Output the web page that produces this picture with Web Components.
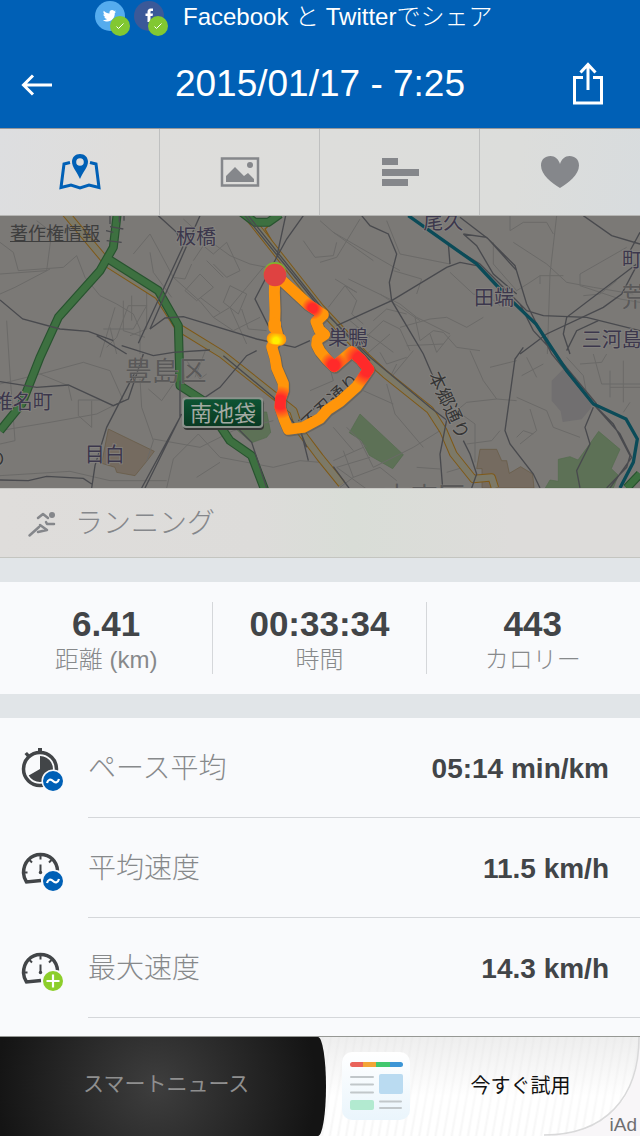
<!DOCTYPE html>
<html lang="ja">
<head>
<meta charset="utf-8">
<meta name="viewport" content="width=device-width, initial-scale=1">
<title>2015/01/17 - 7:25</title>
<style>
  html, body {
    height: 100%;
    margin: 0;
  }

  body {
    font-family: "Liberation Sans", "Noto Sans CJK JP", sans-serif;
    font-weight: 300;
    background: #f9fafc;
  }
</style>
</head>
<body>
<workout-page></workout-page>

<script>
  const icons = {
    back: `<svg width="32" height="24" viewBox="0 0 32 24" fill="none" stroke="#fff" stroke-width="3">
      <path d="M32 13H4M13 3.500L3.500 13l9.500 9.500"/></svg>`,
    share: `<svg width="32" height="44" viewBox="0 0 32 44" fill="none" stroke="#fff" stroke-width="3">
      <path d="M11 15.500H2.500V41h27V15.500H21M16 28V3M8.500 10.500L16 2.500l7.500 8"/></svg>`,
    map: `<svg width="44" height="36" viewBox="0 0 44 36">
      <path d="M12 8.500L6 10 3 33.500l10-2.500 9 3 9-3 10 2.500L38 10l-6-1.500" fill="none" stroke="#0060b6" stroke-width="3"/>
      <path fill="#0060b6" fill-rule="evenodd" d="M22 0c-4.700 0-8 3.300-8 7.800C14 13 19 18 22 25c3-7 8-12 8-17.200C30 3.300 26.700 0 22 0zm0 4.200a3.800 3.800 0 1 1 0 7.600 3.800 3.800 0 0 1 0-7.600z"/></svg>`,
    photo: `<svg width="40" height="32" viewBox="0 0 40 32">
      <path fill="none" stroke="#85878b" stroke-width="2.500" d="M2 2.500h36v27H2z"/>
      <path fill="#85878b" d="M6 26v-6l9-9 9 9 4-3 6 6v3z"/><circle cx="30" cy="9" r="3" fill="#85878b"/></svg>`,
    splits: `<svg width="40" height="32" viewBox="0 0 40 32" fill="#85878b">
      <path d="M2 2h16v7H2zM2 13h37v7H2zM2 23h26v7H2z"/></svg>`,
    heart: `<svg width="40" height="34" viewBox="0 0 40 34" fill="#85878b">
      <path d="M20 33C12 28 1 20 1 10.500 1 4.500 5 1 10.500 1c4.500 0 8 3 9.500 8 1.500-5 5-8 9.500-8C35 1 39 4.500 39 10.500 39 20 28 28 20 33z"/></svg>`,
    run: `<svg width="30" height="28" viewBox="0 0 30 28" fill="none" stroke="#85878b" stroke-width="2.500" stroke-linecap="round" stroke-linejoin="round">
      <path d="M11 8l5-4 5 4M27 14h-7l-1-2M2.500 25.500L12 17M13 15l7 5-9 2"/><circle cx="25" cy="5" r="3" fill="#85878b" stroke="none"/></svg>`,
    pace: `<svg width="44" height="48" viewBox="0 0 44 48">
      <circle cx="20" cy="25" r="16.500" fill="none" stroke="#424548" stroke-width="3.500"/>
      <path d="M18 4h4v5h-4zM4.500 10l2.500-2 3.500 3.500-2.500 2.500z" fill="#424548"/>
      <path d="M20 25V12a13 13 0 1 1-11.300 19.500z" fill="#424548"/>`,
    gauge: `<svg width="44" height="48" viewBox="0 0 44 48">
      <path d="M21 36.500L6.500 38A18 18 0 0 1 3.500 29C3.500 18 11 10.500 20.500 10.500S37 17 37.500 26.500" fill="none" stroke="#424548" stroke-width="3.500"/>
      <path d="M20.500 11v4.500M9.500 16l2.500 2.500M31.500 16L29 18.500M4 28.500h3.500M33 28.500h4M20.500 20.500v8" stroke="#424548" stroke-width="2"/>
      <circle cx="20.500" cy="28.500" r="1.700" fill="#424548"/>`,
    average: `<circle cx="33" cy="37" r="11.500" fill="#f9fafc"/><circle cx="33" cy="37" r="10" fill="#0060b6"/>
      <path d="M27 39c1-3.500 3.500-4.500 6-2s5 1.500 6-2" fill="none" stroke="#fff" stroke-width="2.200"/></svg>`,
    maximum: `<circle cx="33" cy="37" r="11.500" fill="#f9fafc"/><circle cx="33" cy="37" r="10" fill="#8dce2b"/>
      <path d="M33 30.500v13M26.500 37h13" stroke="#fff" stroke-width="2.200"/></svg>`
  };

  class BaseElement extends HTMLElement {
    constructor() {
      super();
      this.attachShadow({ mode: 'open' });
    }

    connectedCallback() {
      this.render();
    }
  }

  class ShareStatus extends BaseElement {
    render() {
      this.shadowRoot.innerHTML = `
        <style>
          :host {
            display: flex;
            align-items: center;
            gap: 14px;
            height: 40px;
            padding-left: 95px;
            color: #fff;
            font-size: 24px;
            line-height: 34px;
            white-space: nowrap;
          }
          svg { display: block; flex: none; }
          p { margin: 0; height: 40px; }
        </style>
        <svg width="74" height="40" viewBox="0 0 74 40">
          <circle cx="15" cy="16" r="15" fill="#55acee"/>
          <path fill="#fff" d="M8 20c2 .2 3-.3 4-1-1.500-.2-2.300-1-2.600-2h1c-1.200-.5-2-1.500-2-2.800l1.200.3c-1.200-1-1.500-2.500-.8-3.700 1.600 1.800 3.500 2.700 5.700 2.800-.4-2 .8-3.500 2.600-3.500.8 0 1.500.4 2 1l1.600-.6-1 1.500 1.500-.3-1.400 1.400c.2 4.500-3 8.400-7.400 8.400-1.600 0-3.200-.5-4.400-1.500z"/>
          <circle cx="54" cy="16" r="15" fill="#3b5998"/>
          <path fill="#fff" d="M52.500 22v-6h-2v-2.500h2v-1.700c0-2 1.200-3.300 3.200-3.300H58V11h-1.500c-.8 0-1 .4-1 1v1.500H58l-.4 2.500h-2.100v6z"/>
          <g fill="#82c832"><circle cx="25" cy="26" r="10"/><circle cx="63" cy="26" r="10"/></g>
          <path d="M21.500 26.500l2 2 5-5M59.500 26.500l2 2 5-5" fill="none" stroke="#fff"/>
        </svg>
        <p><slot></slot></p>
      `;
    }
  }

  class TitleBar extends BaseElement {
    render() {
      this.shadowRoot.innerHTML = `
        <style>
          :host {
            display: grid;
            grid-template-columns: 1fr auto 1fr;
            align-items: center;
            height: 88px;
            padding: 0 36px 0 20px;
            column-gap: 16px;
            color: #fff;
          }
          h1 { margin: 0 0 0 16px; font-size: 37px; line-height: 44px; font-weight: 400; }
          button { padding: 0; border: 0; background: none; display: flex; justify-self: start; }
          button:last-child { justify-self: end; }
        </style>
        <button aria-label="戻る">${icons.back}</button>
        <h1><slot></slot></h1>
        <button aria-label="共有">${icons.share}</button>
      `;
    }
  }

  class TabStrip extends BaseElement {
    render() {
      const tabs = [['map', '地図'], ['photo', '写真'], ['splits', 'ラップ'], ['heart', '心拍数']];
      this.shadowRoot.innerHTML = `
        <style>
          :host {
            display: flex;
            height: 88px;
            box-sizing: border-box;
            border-top: 1px solid #96979a;
            border-bottom: 1px solid #b5b5b3;
            background: linear-gradient(100deg, #dddee0, #dedddb 20%, #dcdddb 80%, #d8dcde);
          }
          button {
            flex: 1;
            display: flex;
            align-items: center;
            justify-content: center;
            padding: 0;
            border: 0;
            border-right: 1px solid #bfc0c0;
            background: none;
          }
          button:last-child { border-right-color: transparent; }
        </style>
        ${tabs.map(([icon, label]) => `<button aria-label="${label}">${icons[icon]}</button>`).join('')}
      `;
    }
  }

  class RouteMap extends BaseElement {
    render() {
      // Map units are thirds of a pixel at a 640px wide window
      const route = 'M825 180L925 272L970 302L948 323L958 348L974 362L952 376L950 392L960 412L980 436L1003 458L1028 436L1055 413L1082 436L1106 466L1070 518L1020 563L982 588L960 613L910 640L865 646L852 615L840 580L842 552L850 530L850 508L830 462L825 432L815 398L828 378L832 360L824 330L825 290L823 235L825 180';
      const hot = [[938, 283, 34], [1001, 454, 42], [1082, 436, 56], [1104, 464, 58], [841, 565, 50]];

      this.shadowRoot.innerHTML = `
        <style>
          :host { display: block; position: relative; background: #7b7976; overflow: hidden; }
          .canvas { display: block; width: 100%; }
          a {
            position: absolute;
            left: 10px;
            top: 6px;
            color: #3e3e3e;
            font-size: 18px;
            line-height: 24px;
            font-weight: 400;
          }
          text {
            font-family: "Noto Sans CJK JP", sans-serif;
            font-weight: 400;
            font-size: 60px;
            fill: #3c374c;
            stroke: #858380;
            stroke-width: 5px;
            paint-order: stroke;
          }
          .ward { font-size: 82px; fill: #5a5959; stroke-width: 2px; }
          .road { font-size: 54px; fill: #353535; }
          .sign { font-size: 66px; fill: #a3aaa3; stroke: none; }
        </style>
        <svg class="canvas" viewBox="0 6 1920 816" aria-label="ルート地図">
          <defs>
            <linearGradient id="sign" x2="0" y2="1">
              <stop stop-color="#0e5433"/><stop offset="1" stop-color="#093a22"/>
            </linearGradient>
            ${hot.map(([x, y, r], i) => `
              <radialGradient id="hot${i}" gradientUnits="userSpaceOnUse" cx="${x}" cy="${y}" r="${r}">
                <stop offset=".4" stop-color="#ff2a2a"/><stop offset="1" stop-color="#ff2a2a" stop-opacity="0"/>
              </radialGradient>`).join('')}
            <radialGradient id="slow" gradientUnits="userSpaceOnUse" cx="828" cy="380" r="30">
              <stop offset=".3" stop-color="#ffee00"/><stop offset="1" stop-color="#ffcc00" stop-opacity="0"/>
            </radialGradient>
          </defs>

          <!-- parks and campuses -->
          <g fill="#5d7156" stroke="#536b4d" stroke-width="2">
            <path d="M1080 600L1210 722L1178 764L1108 724L1085 680L1048 656z"/>
            <path d="M1796 652L1860 706L1834 764L1855 784L1840 822H1636L1650 798L1675 802V736L1710 728L1734 738L1762 700z"/>
            <path d="M800 594L812 655L800 670L755 686L708 645V594z"/>
          </g>
          <g fill="#756b60" stroke="#665943" stroke-width="2">
            <path d="M325 645L463 712L440 742L405 785L350 775L345 760L305 748z"/>
            <path d="M1440 706H1490L1505 740H1520L1528 778L1562 758L1598 780L1602 822H1446V764H1430z"/>
          </g>
          <path fill="#716f70" d="M1655 500L1690 465L1770 550L1775 580L1745 616L1688 624L1682 592L1655 560z"/>

          <!-- side streets -->
          <g fill="none" stroke="#6b6a68" stroke-width="3">
            <path d="M0 85L40 115L55 170L190 160L230 125L255 190L300 245L350 270L400 300L420 345V420M0 180L140 170L155 55L110 20M0 240L45 220L150 165"/>
            <path d="M20 320L30 480L45 680L0 690M0 510L140 475L250 445L330 470L370 560L290 600L150 625L0 650"/>
            <path d="M235 558H300M235 558V605L275 640V560M345 280L300 430M310 345H400L440 275H385L350 370L320 400M330 340L350 420M370 260V350L435 370M395 245V320M440 230V345L390 365"/>
            <path d="M400 120L450 60L480 115L520 190L600 262L640 310L690 280L740 220L790 160M450 115L460 175L515 250M550 15L600 60L690 125L750 150L800 160M580 140L610 95L640 120L680 85L720 170L680 190L640 150M555 230L600 180L640 220L590 260zM690 215L670 265L715 300L740 240zM640 310L700 350L780 310M690 280L740 390M520 190L555 195L575 150M620 140L670 190M600 250L660 295M725 285L745 345L800 350"/>
            <path d="M420 495L425 580L460 680L440 742M460 675L600 700L700 650L820 620M500 822L520 735L595 660M590 790L660 745M595 660L660 730L820 760L900 740L960 745M0 785L210 772L330 800L500 800M120 480L205 515L215 560M445 525L485 560L520 510M560 440L600 495L620 480M620 400L585 490"/>
            <path d="M960 20L1000 55L1200 170M1000 55L1120 140M960 145L1010 130L1080 15M1160 20L1200 120L1350 150M1045 195L1200 270L1250 310L1350 360M1035 215L1070 260L1055 300L1090 330M1140 240L1260 320M1180 170L1265 195L1250 240M1350 175L1420 240L1470 250L1500 275M1480 85V150L1550 230L1590 205L1620 185H1690M1530 5V50L1570 25H1640L1660 60M1540 85L1640 150L1700 205L1780 220L1900 240M1670 5L1650 180L1642 420M1620 185V210M1740 215L1860 255L1920 265M1740 215V180L1880 100M1850 200L1800 240L1750 245"/>
            <path d="M1010 390L1070 340L1140 385L1180 415M1065 400L1150 320L1200 345L1230 410M1100 420L1170 360M1245 310L1260 380L1300 350L1330 355L1370 400L1440 410M1290 360L1310 415L1350 365M1220 395L1330 390M1200 340L1290 315L1340 310L1400 340L1450 310M1120 320L1160 285L1220 300M1050 320L1110 370"/>
            <path d="M1010 760L1120 840M1010 760L1110 730M1080 680L1120 760L1240 700M1160 510L1185 600L1270 700M1240 700L1320 650M1000 740L1090 700M1030 710L1060 790L1140 760L1190 800M1000 640L1060 710M1040 640L1100 700M1060 790L1020 820M1370 590L1400 565L1490 555L1550 560M1370 590L1425 630V745M1550 550L1640 590L1660 640L1740 670M1410 410L1450 500L1490 555M1565 485L1630 450M1470 460L1550 440M1590 585L1610 650L1560 690M1600 660L1570 650L1550 670M1580 430L1610 490M1700 430L1750 485L1760 540M1820 420L1805 445L1740 450M1780 420L1805 510H1920M1830 470V550M1870 440V565M1830 520H1920M1890 565L1870 595M1400 690L1475 680L1500 650M1390 760L1340 775M1250 760L1320 765M1090 530L1180 570"/>
            <path d="M1140 415L1160 450L1220 430M1190 450L1165 500L1240 410M910 80L945 130L1000 125L1010 85M1005 195L1070 235L1035 215L985 280M930 530L1000 500L985 445"/>
          </g>

          <!-- trunk roads -->
          <g fill="none" stroke-linejoin="round">
            <g stroke="#7f5917">
              <path stroke-width="25" d="M195 -5L325 150L475 245L535 340L665 420L880 590L900 650L960 730L1025 810M735 -5L960 280L1100 430L1155 480L1290 588L1330 650L1360 720L1420 795L1475 790L1485 822"/>
              <path stroke-width="4" d="M850 -5L795 45L815 80"/>
            </g>
            <path stroke="#7c7968" stroke-width="19" d="M195 -5L325 150L475 245L535 340L665 420L880 590L900 650L960 730L1025 810M735 -5L960 280L1100 430L1155 480L1290 588L1330 650L1360 720L1420 795L1475 790L1485 822"/>
            <path stroke="#28532f" stroke-width="27" d="M352 -5L340 100L300 170L175 310L120 430L65 570L0 650M325 135L475 230L535 335L540 515L610 560L690 680L755 725L795 830M725 -5L765 25H805L840 0M1920 780L1880 822"/>
            <path stroke="#3d7040" stroke-width="20" d="M352 -5L340 100L300 170L175 310L120 430L65 570L0 650M325 135L475 230L535 335L540 515L610 560L690 680L755 725L795 830M725 -5L765 25H805L840 0M1920 780L1880 822"/>
          </g>

          <!-- railways -->
          <g fill="none" stroke="#494a4e" stroke-width="4">
            <path d="M0 258L68 315L180 345L265 352L340 380M290 365L380 420M365 395L460 425L520 415L630 408M450 345L495 312L550 308L770 375L885 400L930 380"/>
            <path d="M475 5L530 55L550 95L415 388M600 5L450 345M340 55L318 50M365 85L320 80M370 45L330 38M857 5L830 130L765 255L815 355M910 5L860 75L830 130M735 5L950 270L1110 430L1290 580L1340 618L1320 720L1328 822M745 5L960 275L1110 440"/>
            <path d="M0 503L110 520L205 513L340 575L385 555L430 420M405 475L320 640L285 755L275 822M0 798L85 800L140 787L250 793L275 810M540 500V610L425 822M545 600L435 822M700 630L755 685L800 822M600 560L660 520L740 425L770 410"/>
            <path d="M1085 5L1110 35L1165 60L1190 120L1168 205L1175 260L1270 420L1300 490M1010 335L1175 260L1340 160L1380 145L1430 155M1345 90L1350 150M1390 60L1460 70L1545 155L1580 270L1655 420L1770 560M1380 10L1465 75L1550 170M1375 110L1440 150L1530 240L1580 290L1630 305L1760 310L1920 350M1390 60L1430 95L1480 180L1550 240M1560 270L1600 350L1670 425L1790 570"/>
            <path d="M1750 5L1835 65L1920 90M1885 120L1920 55M1910 150L1700 310L1690 360L1710 420M1910 155L1865 240L1810 280L1640 360L1560 420M1795 320L1730 350L1700 410M1570 400L1545 435L1515 650L1530 690L1600 780L1620 822M1390 680L1410 720L1430 780L1415 822M1770 560L1840 630L1890 725L1880 760L1820 822M1670 425L1780 570L1860 660L1895 730L1830 822M1780 580L1755 640L1770 690L1730 770L1740 822"/>
            <path d="M670 425L820 550L900 650L920 700M895 620L960 570M900 640L925 740M1000 758L1060 840M330 0V30M372 0V20M358 0V25"/>
          </g>
          <path d="M1225 5L1430 150L1500 225L1540 265L1608 330L1700 470L1780 570L1878 615L1912 675L1900 745L1860 822" fill="none" stroke="#0b4b58" stroke-width="10"/>

          <!-- place names -->
          <text x="528" y="90">板橋</text>
          <text x="1270" y="46">尾久</text>
          <text x="1422" y="274">田端</text>
          <text x="1866" y="160">町</text>
          <text x="1865" y="278" class="ward">荒</text>
          <text x="1745" y="400">三河島</text>
          <text x="984" y="394">巣鴨</text>
          <text x="374" y="500" class="ward">豊島区</text>
          <text x="-22" y="586">椎名町</text>
          <text x="254" y="744">目白</text>
          <text x="-40" y="752" class="road">の</text>
          <text x="1150" y="880" class="ward">文京区</text>
          <g transform="translate(1284 484) rotate(65)"><text class="road">本郷通り</text></g>
          <g transform="translate(926 650) rotate(-43)"><text class="road">不忍通り</text></g>

          <rect x="550" y="556" width="242" height="92" rx="12" fill="#353735"/>
          <rect x="546" y="550" width="244" height="92" rx="12" fill="#8b928c"/>
          <rect x="552" y="556" width="232" height="80" rx="8" fill="url(#sign)"/>
          <text x="570" y="621" class="sign">南池袋</text>

          <!-- recorded route, red where it was fast -->
          <g fill="none" stroke-width="33" stroke-linejoin="round" stroke-linecap="round">
            <path d="${route}" stroke="#5e5850" stroke-opacity=".6" stroke-width="37" transform="translate(2 3)"/>
            <path d="${route}" stroke="#ff950a"/>
            <path d="M824 330V340M819 374L840 376" stroke="#ff950a" stroke-width="38"/>
            ${hot.map((point, i) => `<path d="${route}" stroke="url(#hot${i})"/>`).join('')}
            <path d="M819 374L840 376" stroke="url(#slow)"/>
          </g>
          <circle cx="825" cy="178" r="34" fill="#80b52c"/>
          <circle cx="825" cy="183" r="34" fill="#df4241"/>
        </svg>
        <a href="#legal">著作権情報</a>
      `;
    }
  }

  class ActivityType extends BaseElement {
    render() {
      this.shadowRoot.innerHTML = `
        <style>
          :host {
            display: flex;
            align-items: center;
            gap: 18px;
            height: 70px;
            box-sizing: border-box;
            padding: 2px 27px 0;
            border-top: 1px solid #c9c9c6;
            border-bottom: 1px solid #c4c5c0;
            background: linear-gradient(90deg, #dfdddb, #dddcda 40%, #d9ddd7 55%, #dddcda 80%);
            color: #85878b;
            font-size: 28px;
            line-height: 40px;
          }
        </style>
        ${icons.run}<span><slot></slot></span>
      `;
    }
  }

  class StatCell extends BaseElement {
    render() {
      this.shadowRoot.innerHTML = `
        <style>
          :host {
            flex: 1;
            display: flex;
            flex-direction: column;
            align-items: center;
            border-right: 1px solid #d5d7da;
          }
          :host(:last-child) { border-right-color: transparent; }
          strong { color: #424548; font-size: 35px; line-height: 44px; font-weight: 700; }
          span { color: #87898b; font-size: 24px; line-height: 28px; }
        </style>
        <strong>${this.getAttribute('value')}</strong>
        <span><slot></slot></span>
      `;
    }
  }

  class MetricRow extends BaseElement {
    render() {
      this.shadowRoot.innerHTML = `
        <style>
          :host {
            display: flex;
            padding-left: 20px;
            height: 100px;
            align-items: center;
          }
          svg { flex: none; margin-right: 24px; }
          div {
            flex: 1;
            display: flex;
            align-items: center;
            justify-content: space-between;
            height: 100px;
            box-sizing: border-box;
            padding: 2px 31px 0 0;
            border-bottom: 1px solid #d5d7da;
            font-size: 28px;
            line-height: 40px;
            color: #87898b;
          }
          strong { color: #424548; font-weight: 700; }
        </style>
        ${icons[this.getAttribute('icon')]}${icons[this.getAttribute('badge')]}
        <div><span><slot></slot></span><strong>${this.getAttribute('value')}</strong></div>
      `;
    }
  }

  class AdBanner extends BaseElement {
    render() {
      this.shadowRoot.innerHTML = `
        <style>
          :host {
            display: flex;
            height: 100px;
            position: relative;
            box-sizing: border-box;
            border-top: 1px solid #969894;
            overflow: hidden;
            font-weight: 400;
            background:
              linear-gradient(rgba(234, 234, 234, .8), rgba(255, 255, 255, .7) 60%, rgba(255, 255, 255, .5)),
              repeating-linear-gradient(100deg, #fff 0 4px, #ececec 6px, #fff 8px);
          }
          .name, button {
            display: flex;
            align-items: center;
            justify-content: center;
            line-height: 28px;
          }
          .name {
            width: 51%;
            box-sizing: border-box;
            padding: 0 0 5px 6px;
            border-radius: 0 8px 8px 0 / 0 50% 50% 0;
            background: radial-gradient(circle at 48% 50%, #3e3e3e, #141414 160px);
            color: #8f8f8f;
            font-size: 21px;
          }
          button {
            flex: 1;
            gap: 60px;
            justify-content: flex-start;
            padding: 0 0 2px 16px;
            border: 0;
            background: none;
            font: inherit;
            font-size: 20px;
            color: #111;
          }
          .label { padding-bottom: 3px; }
          .curl { position: absolute; right: 0; bottom: 0; }
          small {
            position: absolute;
            right: 3px;
            bottom: 0;
            color: #6e6e70;
            font-size: 19px;
            line-height: 22px;
          }
        </style>
        <div class="name"><slot></slot></div>
        <button>
          <svg width="68" height="68" viewBox="0 0 68 68">
            <defs>
              <linearGradient id="paper" x2="0" y2="1"><stop stop-color="#fff"/><stop offset="1" stop-color="#eaf5fc"/></linearGradient>
              <clipPath id="bar"><rect x="8" y="10" width="53" height="5" rx="2.500"/></clipPath>
            </defs>
            <rect width="68" height="68" rx="10" fill="url(#paper)"/>
            <g clip-path="url(#bar)">
              <path fill="#e9635a" d="M8 10h13v5H8z"/><path fill="#f3a536" d="M21 10h13v5H21z"/>
              <path fill="#41c76e" d="M34 10h14v5H34z"/><path fill="#3d96d6" d="M48 10h13v5H48z"/>
            </g>
            <path stroke="#c1c7ca" stroke-width="2" stroke-linecap="round" d="M9 25h22M9 32.500h22M9 40.500h22M38 49.500h21M38 56h21"/>
            <rect x="37" y="22" width="24" height="20" rx="2" fill="#badbf1"/>
            <rect x="8" y="48" width="24" height="10" rx="2" fill="#b2ead0"/>
          </svg>
          <span class="label">${this.getAttribute('action')}</span>
        </button>
        <svg class="curl" width="96" height="99" viewBox="0 0 96 99">
          <path d="M96 0C96 62 62 99 0 99H96z" fill="#f8f6f8"/>
          <path d="M95 0C95 61 61 98 0 98" fill="none" stroke="#d9d9da" stroke-width="1.500"/>
        </svg>
        <small>iAd</small>
      `;
    }
  }

  class WorkoutPage extends BaseElement {
    render() {
      this.shadowRoot.innerHTML = `
        <style>
          :host { display: flex; flex-direction: column; min-height: 100%; }
          header { background: #0060b6; }
          .stats, .metrics { background: #f9fafc; border-top: 24px solid #e1e5e8; }
          .stats { display: flex; padding: 20px 0; }
          .metrics { flex: 1; }
        </style>
        <header>
          <share-status>Facebook と Twitterでシェア</share-status>
          <title-bar>2015/01/17 - 7:25</title-bar>
        </header>
        <tab-strip></tab-strip>
        <route-map></route-map>
        <activity-type>ランニング</activity-type>
        <section class="stats">
          <stat-cell value="6.41">距離 (km)</stat-cell>
          <stat-cell value="00:33:34">時間</stat-cell>
          <stat-cell value="443">カロリー</stat-cell>
        </section>
        <section class="metrics">
          <metric-row icon="pace" badge="average" value="05:14 min/km">ペース平均</metric-row>
          <metric-row icon="gauge" badge="average" value="11.5 km/h">平均速度</metric-row>
          <metric-row icon="gauge" badge="maximum" value="14.3 km/h">最大速度</metric-row>
        </section>
        <ad-banner action="今すぐ試用">スマートニュース</ad-banner>
      `;
    }
  }

  customElements.define('share-status', ShareStatus);
  customElements.define('title-bar', TitleBar);
  customElements.define('tab-strip', TabStrip);
  customElements.define('route-map', RouteMap);
  customElements.define('activity-type', ActivityType);
  customElements.define('stat-cell', StatCell);
  customElements.define('metric-row', MetricRow);
  customElements.define('ad-banner', AdBanner);
  customElements.define('workout-page', WorkoutPage);
</script>
</body>
</html>
